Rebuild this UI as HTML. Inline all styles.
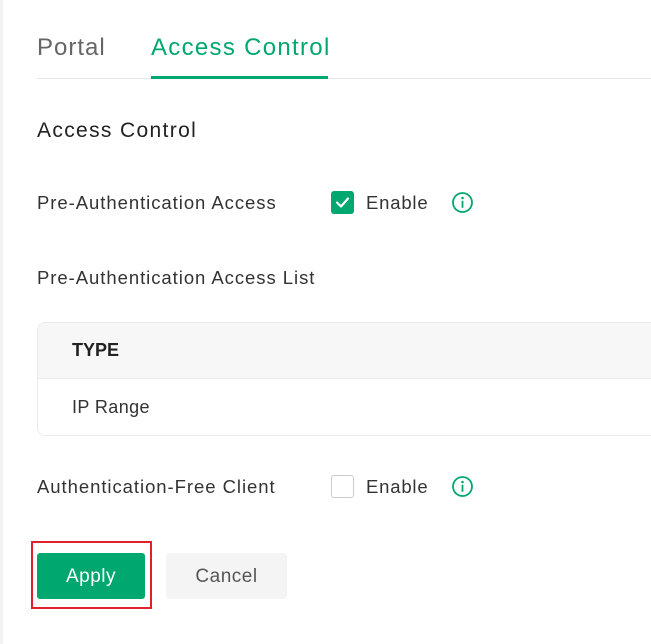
<!DOCTYPE html>
<html><head><meta charset="utf-8"><style>
*{margin:0;padding:0;box-sizing:border-box}
body{width:651px;height:644px;background:#fff;font-family:"Liberation Sans",sans-serif;color:#2b2b2b;position:relative;overflow:hidden}
.strip{position:absolute;left:0;top:0;width:3px;height:644px;background:#f2f2f2}
.a{position:absolute;white-space:nowrap}
.l{font-size:18.5px;color:#333;letter-spacing:0.95px}
.cb{position:absolute;width:23px;height:23px;border-radius:3px}
</style></head><body>
<div class="strip"></div>
<div class="a" style="left:37px;top:34px;font-size:24px;color:#666;letter-spacing:1px">Portal</div>
<div class="a" style="left:151px;top:34px;font-size:24px;color:#00a870;letter-spacing:1.3px">Access Control</div>
<div class="a" style="left:37px;top:78px;width:614px;height:1px;background:#e8e8e8"></div>
<div class="a" style="left:151px;top:76px;width:177px;height:3px;background:#00a870"></div>
<div class="a" style="left:37px;top:119px;font-size:21px;color:#222;letter-spacing:1.35px">Access Control</div>
<div class="a l" style="left:37px;top:192px">Pre-Authentication Access</div>
<div class="cb" style="left:331px;top:191px;background:#00a870">
<svg width="23" height="23" viewBox="0 0 23 23"><path d="M6 11.5l4 4 7-8" stroke="#fff" stroke-width="2.2" fill="none" stroke-linecap="round" stroke-linejoin="round"/></svg></div>
<div class="a" style="left:366px;top:192px;font-size:18.5px;color:#333;letter-spacing:0.8px">Enable</div>
<svg class="a" style="left:451px;top:191px" width="23" height="23" viewBox="0 0 23 23"><circle cx="11.5" cy="11.5" r="9.5" stroke="#00a870" stroke-width="1.8" fill="none"/><circle cx="11.5" cy="7" r="1.3" fill="#00a870"/><rect x="10.6" y="9.8" width="1.8" height="7" fill="#00a870"/></svg>
<div class="a l" style="left:37px;top:267px">Pre-Authentication Access List</div>
<div class="a" style="left:37px;top:322px;width:640px;height:114px;border:1px solid #ececec;border-radius:8px;overflow:hidden">
<div style="height:56px;background:#f7f7f7;border-bottom:1px solid #ececec"></div></div>
<div class="a" style="left:72px;top:340px;font-size:18px;font-weight:bold;color:#222">TYPE</div>
<div class="a" style="left:72px;top:397px;font-size:18px;color:#333;letter-spacing:0.4px">IP Range</div>
<div class="a l" style="left:37px;top:476px">Authentication-Free Client</div>
<div class="cb" style="left:331px;top:475px;border:1px solid #ccc;background:#fff"></div>
<div class="a" style="left:366px;top:476px;font-size:18.5px;color:#333;letter-spacing:0.8px">Enable</div>
<svg class="a" style="left:451px;top:475px" width="23" height="23" viewBox="0 0 23 23"><circle cx="11.5" cy="11.5" r="9.5" stroke="#00a870" stroke-width="1.8" fill="none"/><circle cx="11.5" cy="7" r="1.3" fill="#00a870"/><rect x="10.6" y="9.8" width="1.8" height="7" fill="#00a870"/></svg>
<div class="a" style="left:31px;top:541px;width:121px;height:68px;border:2px solid #e0202a"></div>
<div class="a" style="left:37px;top:553px;width:108px;height:46px;background:#00a870;border-radius:3px;color:#fff;font-size:19px;text-align:center;line-height:47px;letter-spacing:0.5px">Apply</div>
<div class="a" style="left:166px;top:553px;width:121px;height:46px;background:#f4f4f4;border-radius:3px;color:#555;font-size:19px;text-align:center;line-height:47px;letter-spacing:0.5px">Cancel</div>
</body></html>
